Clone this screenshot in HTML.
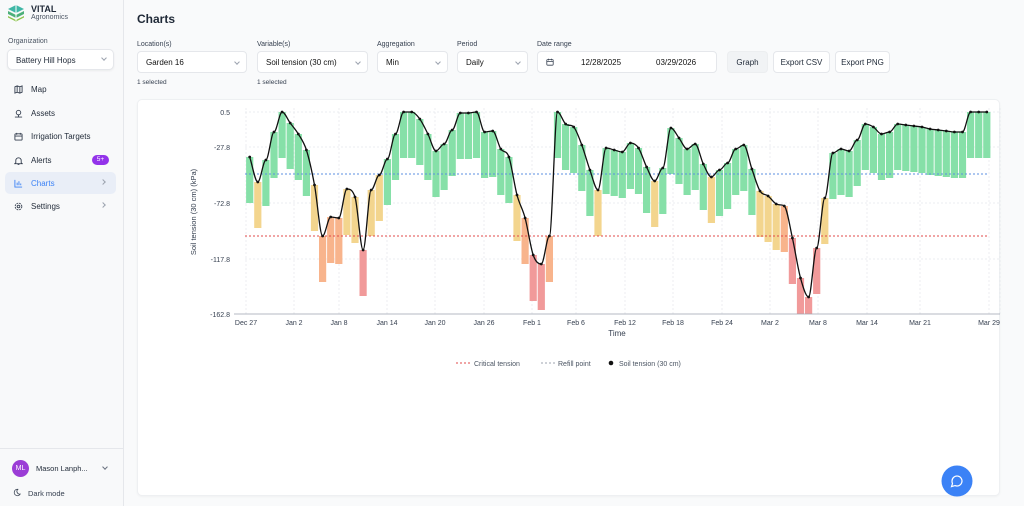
<!DOCTYPE html>
<html><head><meta charset="utf-8"><style>
*{box-sizing:border-box;margin:0;padding:0}
body{width:1024px;height:506px;overflow:hidden;font-family:"Liberation Sans",sans-serif;background:#f9fafb;color:#1f2937;position:relative}
.sb{position:absolute;left:0;top:0;width:124px;height:506px;background:#f8f9fa;border-right:1px solid #e5e7eb}
.abs{position:absolute}
.nav{position:absolute;left:5px;width:111px;height:22px;display:flex;align-items:center;padding-left:9px;font-size:8px;color:#1f2937}
.nav svg{margin-right:8px}
.lbl{position:absolute;font-size:7px;color:#374151}
.inp{position:absolute;top:51px;height:22px;background:#fff;border:1px solid #e5e7eb;border-radius:4px;font-size:8px;display:flex;align-items:center;padding-left:8px;color:#111}
.chev{position:absolute;right:7px;top:8px;width:4px;height:4px;border-right:1px solid #9ca3af;border-bottom:1px solid #9ca3af;transform:rotate(45deg)}
.btn{position:absolute;top:51px;height:22px;border:1px solid #e5e7eb;border-radius:4px;font-size:8px;display:flex;align-items:center;justify-content:center;background:#fff}
.sel{position:absolute;top:79px;font-size:6.5px;color:#374151}
</style></head><body>
<div class="sb">
  <svg class="abs" style="left:7px;top:4px" width="18" height="18" viewBox="0 0 18 18">
    <path d="M9 1 L17 5 L9 9 L1 5Z" fill="#3fb7a6"/><path d="M1 7 L9 11 L17 7 L17 10 L9 14 L1 10Z" fill="#4caf7a"/><path d="M1 12 L9 16 L17 12 L17 13.5 L9 17.5 L1 13.5Z" fill="#8bc34a"/><path d="M9 1 L9 17" stroke="#fff" stroke-width="1"/>
  </svg>
  <div class="abs" style="left:31px;top:4px;font-size:9px;font-weight:bold">VITAL</div>
  <div class="abs" style="left:31px;top:14px;font-size:7px;color:#4b5563">Agronomics</div>
  <div class="abs" style="left:8px;top:38px;font-size:7px;color:#4b5563">Organization</div>
  <div class="abs" style="left:7px;top:49px;width:107px;height:21px;background:#fff;border:1px solid #e5e7eb;border-radius:5px;box-shadow:0 1px 2px rgba(0,0,0,.06);font-size:8px;padding:6px 0 0 8px">Battery Hill Hops<span class="chev" style="top:6px"></span></div>
  <div class="nav" style="top:78px"><svg width="9" height="9" viewBox="0 0 10 10" fill="none" stroke="#374151" stroke-width="1"><path d="M1 2L3.5 1L6.5 2L9 1V8L6.5 9L3.5 8L1 9Z M3.5 1V8 M6.5 2V9"/></svg>Map</div>
  <div class="nav" style="top:102px"><svg width="9" height="9" viewBox="0 0 10 10" fill="none" stroke="#374151" stroke-width="1"><circle cx="5" cy="4" r="2.5"/><path d="M1 9H9 M5 6.5V9"/></svg>Assets</div>
  <div class="nav" style="top:125px"><svg width="9" height="9" viewBox="0 0 10 10" fill="none" stroke="#374151" stroke-width="1"><rect x="1" y="2" width="8" height="7" rx="1"/><path d="M1 4.5H9 M3 1V3 M7 1V3"/></svg>Irrigation Targets</div>
  <div class="nav" style="top:149px"><svg width="9" height="9" viewBox="0 0 10 10" fill="none" stroke="#374151" stroke-width="1"><path d="M2 7.5V5a3 3 0 016 0v2.5L9 8.5H1Z M4 9.3h2"/></svg>Alerts<span class="abs" style="left:87px;top:6px;width:17px;height:10px;border-radius:5px;background:#9333ea;color:#fff;font-size:6.5px;text-align:center;line-height:10px">5+</span></div>
  <div class="nav" style="top:172px;background:#e9eef7;border-radius:5px;color:#3b82f6"><svg width="9" height="9" viewBox="0 0 10 10" fill="none" stroke="#3b82f6" stroke-width="1"><path d="M1 1V9H9 M3.5 7V4 M5.5 7V2.5 M7.5 7V5"/></svg>Charts<span class="abs" style="left:96px;top:8px;width:4px;height:4px;border-right:1px solid #9ca3af;border-top:1px solid #9ca3af;transform:rotate(45deg)"></span></div>
  <div class="nav" style="top:195px"><svg width="9" height="9" viewBox="0 0 10 10" fill="none" stroke="#374151" stroke-width="1"><circle cx="5" cy="5" r="1.5"/><circle cx="5" cy="5" r="3.7" stroke-dasharray="2 1"/></svg>Settings<span class="abs" style="left:96px;top:8px;width:4px;height:4px;border-right:1px solid #9ca3af;border-top:1px solid #9ca3af;transform:rotate(45deg)"></span></div>
  <div class="abs" style="left:0;top:448px;width:124px;border-top:1px solid #e5e7eb"></div>
  <div class="abs" style="left:12px;top:460px;width:17px;height:17px;border-radius:50%;background:#9b3dd6;color:#fff;font-size:7px;text-align:center;line-height:17px">ML</div>
  <div class="abs" style="left:36px;top:464px;font-size:7.5px">Mason Lanph...</div>
  <span class="abs" style="left:103px;top:465px;width:4px;height:4px;border-right:1px solid #6b7280;border-bottom:1px solid #6b7280;transform:rotate(45deg)"></span>
  <svg class="abs" style="left:13px;top:488px" width="8" height="9" viewBox="0 0 10 10" fill="none" stroke="#374151" stroke-width="1"><path d="M6 1a4 4 0 1 0 3 6 3.5 3.5 0 0 1-3-6z"/></svg>
  <div class="abs" style="left:28px;top:489px;font-size:7.5px;color:#374151">Dark mode</div>
</div>

<div class="abs" style="left:137px;top:12px;font-size:12px;font-weight:bold">Charts</div>
<div class="lbl" style="left:137px;top:41px">Location(s)</div>
<div class="lbl" style="left:257px;top:41px">Variable(s)</div>
<div class="lbl" style="left:377px;top:41px">Aggregation</div>
<div class="lbl" style="left:457px;top:41px">Period</div>
<div class="lbl" style="left:537px;top:41px">Date range</div>
<div class="inp" style="left:137px;width:110px">Garden 16<span class="chev"></span></div>
<div class="inp" style="left:257px;width:111px">Soil tension (30 cm)<span class="chev"></span></div>
<div class="inp" style="left:377px;width:71px">Min<span class="chev"></span></div>
<div class="inp" style="left:457px;width:71px">Daily<span class="chev"></span></div>
<div class="inp" style="left:537px;width:180px"><svg width="8" height="8" viewBox="0 0 10 10" fill="none" stroke="#374151" stroke-width="1"><rect x="1" y="2" width="8" height="7" rx="1"/><path d="M1 4.5H9 M3 1V3 M7 1V3"/></svg><span style="position:absolute;left:43px">12/28/2025</span><span style="position:absolute;left:118px">03/29/2026</span></div>
<div class="btn" style="left:727px;width:41px;background:#f1f3f5;border-color:#eceef0">Graph</div>
<div class="btn" style="left:773px;width:57px">Export CSV</div>
<div class="btn" style="left:835px;width:55px">Export PNG</div>
<div class="sel" style="left:137px">1 selected</div>
<div class="sel" style="left:257px">1 selected</div>

<div class="abs" style="left:137px;top:99px;width:863px;height:397px;background:#fff;border:1px solid #eef0f2;border-radius:5px;box-shadow:0 1px 2px rgba(0,0,0,.04)"></div>

<svg class="abs" style="left:0;top:0" width="1024" height="506" id="ch" font-family="Liberation Sans, sans-serif">
  <g stroke="#e5e7eb" stroke-dasharray="2 2" stroke-width="0.7" id="grid"></g>
  <g id="bars"></g>
  <line x1="245" x2="989" y1="174" y2="174" stroke="#5b8fe0" stroke-dasharray="2 2" stroke-width="1"/>
  <line x1="245" x2="989" y1="236" y2="236" stroke="#e04848" stroke-dasharray="2 2" stroke-width="1"/>
  <path id="ln" fill="none" stroke="#111" stroke-width="1.3"/>
  <g id="pts" fill="#111"></g>
  <line x1="234" x2="1000" y1="314" y2="314" stroke="#9ca3af" stroke-width="0.8"/>
  <g font-size="7" fill="#374151" text-anchor="end">
    <text x="230" y="115">0.5</text><text x="230" y="150">-27.8</text><text x="230" y="206">-72.8</text><text x="230" y="262">-117.8</text><text x="230" y="317">-162.8</text>
  </g>
  <g font-size="7" fill="#374151" text-anchor="middle" id="xl">
    <text x="246" y="325">Dec 27</text><text x="294" y="325">Jan 2</text><text x="339" y="325">Jan 8</text><text x="387" y="325">Jan 14</text><text x="435" y="325">Jan 20</text><text x="484" y="325">Jan 26</text><text x="532" y="325">Feb 1</text><text x="576" y="325">Feb 6</text><text x="625" y="325">Feb 12</text><text x="673" y="325">Feb 18</text><text x="722" y="325">Feb 24</text><text x="770" y="325">Mar 2</text><text x="818" y="325">Mar 8</text><text x="867" y="325">Mar 14</text><text x="920" y="325">Mar 21</text><text x="989" y="325">Mar 29</text>
  </g>
  <text x="617" y="336" font-size="8" fill="#374151" text-anchor="middle">Time</text>
  <text transform="translate(196,212) rotate(-90)" font-size="7.5" fill="#374151" text-anchor="middle">Soil tension (30 cm) (kPa)</text>
  <g font-size="7" fill="#4b5563">
    <line x1="456" x2="471" y1="363" y2="363" stroke="#e04848" stroke-dasharray="2 2"/><text x="474" y="366">Critical tension</text>
    <line x1="541" x2="555" y1="363" y2="363" stroke="#9ca3af" stroke-dasharray="2 2"/><text x="558" y="366">Refill point</text>
    <circle cx="611" cy="363" r="2.3" fill="#111"/><text x="619" y="366">Soil tension (30 cm)</text>
  </g>
  <circle cx="957" cy="481" r="15.5" fill="#3b82f6"/>
  <path d="M952 481a5 5 0 1 1 3 4.6l-3.5 1 1-3a5 5 0 0 1-.5-2.6z" fill="none" stroke="#fff" stroke-width="1.2"/>
</svg>
<script>
var Y=[157,182,160,132,112,123,134,150,185,236,217,218,189,197,250,190,175,159,134,112,112,119,134,151,144,130,113,113,112,132,131,149,157,195,218,255,264,236,112,124,127,145,170,190,148,150,152,143,148,167,181,168,128,138,149,144,164,177,170,163,149,145,169,191,196,204,206,238,278,297,248,198,153,149,151,140,124,127,134,132,124,125,126,127,129,130,131,132,132,112,112,112];
var ns="http://www.w3.org/2000/svg";
function el(t,a,p){var e=document.createElementNS(ns,t);for(var k in a)e.setAttribute(k,a[k]);p.appendChild(e);return e}
var g=document.getElementById('grid');
[112,147,203,259].forEach(function(y){el('line',{x1:245,x2:1000,y1:y,y2:y},g)});
[246,294,339,387,435,484,532,576,625,673,722,770,818,867,920,989,1000].forEach(function(x){el('line',{x1:x,x2:x,y1:108,y2:314},g)});
var b=document.getElementById('bars'),p=document.getElementById('pts');
var h=8.1,X=function(i){return 249.7+h*i};
var n=Y.length,s=[],m=[];
for(var i=0;i<n-1;i++)s.push((Y[i+1]-Y[i])/h);
for(var i=0;i<n;i++){
 if(i==0)m.push(s[0]);else if(i==n-1)m.push(s[n-2]);
 else{var a=s[i-1],c=s[i];m.push(a*c<=0?0:(Math.sign(a)*Math.min(Math.abs(a),Math.abs(c),0.5*Math.abs((a+c)/2))*2>0?Math.sign(a)*Math.min(Math.abs(a)*3,Math.abs(c)*3,Math.abs((a+c)/2)):0));}
}
var d='';
for(var i=0;i<n;i++){
 var y=Y[i],col=y<172?'#86e0a8':y<205?'#f3d58e':y<237?'#f8b48c':'#f19a9a';
 var bot=Math.min(y+46,314);
 el('rect',{x:X(i)-3.6,y:y,width:7.2,height:bot-y,fill:col},b);
 el('circle',{cx:X(i),cy:y,r:1.4},p);
 if(i==0)d='M'+X(0)+' '+y;else{
  var x1=X(i-1),x2=X(i);
  d+=' C'+(x1+h/3)+' '+(Y[i-1]+m[i-1]*h/3)+' '+(x2-h/3)+' '+(y-m[i]*h/3)+' '+x2+' '+y;}
}
document.getElementById('ln').setAttribute('d',d);
</script>
</body></html>
